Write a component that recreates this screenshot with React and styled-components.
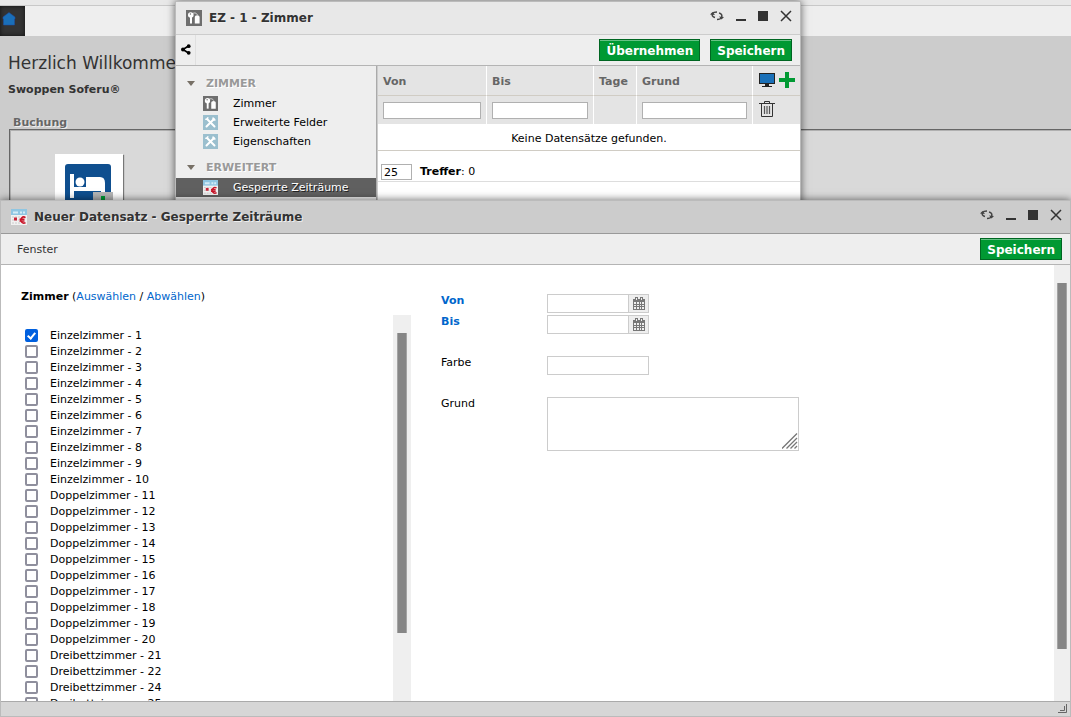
import React from "react"
import styled, { createGlobalStyle } from "styled-components"


const GlobalStyle = createGlobalStyle`
    * {
        box-sizing: border-box;
    }
    body {
        margin: 0;
        background-color: #cccccc;
        font-family: "DejaVu Sans", Verdana, sans-serif;
        font-size: 11px;
        line-height: 16px;
        color: #000000;
    }
    input, button, textarea {
        font-family: inherit;
        font-size: 11px;
    }
`

const zimmerListe = [
    ...[1, 2, 3, 4, 5, 6, 7, 8, 9, 10].map(nr => `Einzelzimmer - ${nr}`),
    ...[11, 12, 13, 14, 15, 16, 17, 18, 19, 20].map(nr => `Doppelzimmer - ${nr}`),
    ...[21, 22, 24, 25].map(nr => `Dreibettzimmer - ${nr}`)
]

/* Icons */

const HomeIcon = () => (
    <svg width="14" height="14" viewBox="0 0 14 14">
        <path d="M7 0.5 L13 5 V7 H12.500 V13 H1.500 V7 H1 V5 Z" fill="#1a6fb8" stroke="#1e4fa8" strokeWidth="0.5" />
    </svg>
)

const KeyIcon = ({ size }) => (
    <svg width={size} height={size} viewBox="0 0 16 16">
        <rect width="16" height="16" fill="#6e6e6e" />
        <circle cx="4.800" cy="5" r="2.800" fill="#fff" />
        <circle cx="4.400" cy="4" r="0.700" fill="#6e6e6e" />
        <path d="M4 7h2v6.500H4z" fill="#fff" />
        <path d="M6 4c2-1.800 4.500-1.200 5.500 1" fill="none" stroke="#fff" strokeWidth="0.700" />
        <path d="M8.800 7q0-1.800 2.400-1.800T13.600 7v6.500H8.800z" fill="#fff" />
    </svg>
)

const ToolsIcon = () => (
    <svg width="15" height="15" viewBox="0 0 15 15">
        <rect width="15" height="15" fill="#9bbfce" />
        <path d="M4.500 4.500l7 7M11 4l-7.500 7.500" stroke="#fff" strokeWidth="2" strokeLinecap="round" />
        <path d="M2.300 4.200a2 2 0 0 0 2.500-2M10.500 2.500a1.500 1.500 0 0 0 2 2.200" fill="none" stroke="#fff" strokeWidth="1.600" />
    </svg>
)

const EuroCalendarIcon = ({ size }) => (
    <svg width={size} height={size} viewBox="0 0 16 16">
        <rect width="16" height="16" fill="#f1f1f1" />
        <rect width="16" height="6" fill="#8fc6e2" />
        <path d="M2 3.500h5M9 3.500h2M12 3.500h2" stroke="#d4ebf6" strokeWidth="2" />
        <path d="M1 8h8M1 11h7M1 14h8" stroke="#ccc" strokeDasharray="2 1" />
        <rect x="3" y="8.500" width="3" height="3" fill="#c8283c" />
        <path d="M14.500 8.500a3 3 0 1 0 0 5M8.500 10.200h5M8.500 12h5" fill="none" stroke="#c81428" strokeWidth="1.500" />
    </svg>
)

const ShareIcon = () => (
    <svg width="10" height="11" viewBox="0 0 10 11">
        <path d="M2 5.500L7.500 2M2 5.500L7.500 9" stroke="#000" strokeWidth="1.500" />
        <circle cx="2" cy="5.500" r="2" />
        <circle cx="7.700" cy="2.200" r="1.900" />
        <circle cx="7.700" cy="8.800" r="1.900" />
    </svg>
)

const RefreshIcon = () => (
    <svg width="14" height="12" viewBox="0 0 14 12" fill="none" stroke="#444" strokeWidth="1.500">
        <path d="M5 7.500C2.500 7 1.500 5 2.500 3.500Q3.500 2 7 2" />
        <path d="M9 3C11.500 3.500 12.500 5.500 11.500 7.500Q10.500 9.500 7 9.500" />
        <path d="M0 4.500L2.500 2L5 5zM14 7L11.500 9.500L9 6.500z" fill="#444" stroke="none" />
    </svg>
)

const MinimizeIcon = () => (
    <svg width="10" height="12" viewBox="0 0 10 12">
        <rect y="9" width="10" height="2" fill="#333" />
    </svg>
)

const MaximizeIcon = () => (
    <svg width="10" height="10" viewBox="0 0 10 10">
        <rect width="10" height="10" fill="#333" />
    </svg>
)

const CloseIcon = () => (
    <svg width="12" height="12" viewBox="0 0 12 12">
        <path d="M1 1L11 11M11 1L1 11" stroke="#333" strokeWidth="1.500" />
    </svg>
)

const MonitorIcon = () => (
    <svg width="16" height="14" viewBox="0 0 16 14">
        <rect x="0.500" y="0.500" width="15" height="10" fill="#1a70b8" stroke="#222" />
        <path d="M6 11h4v2h-4zM3 13h10v1H3z" fill="#222" />
    </svg>
)

const PlusIcon = () => (
    <svg width="16" height="16" viewBox="0 0 16 16">
        <path d="M6 0h4v6h6v4h-6v6H6v-6H0V6h6z" fill="#009933" />
    </svg>
)

const TrashIcon = () => (
    <svg width="16" height="16" viewBox="0 0 16 16" fill="none" stroke="#333">
        <path d="M5.500 2V0.500h5V2M0 2.500h16M2.500 3v12.500h11V3" />
        <path d="M5.500 5v8M8 5v8M10.500 5v8" stroke="#555" strokeWidth="1.200" />
    </svg>
)

const CalendarIcon = () => (
    <svg width="12" height="13" viewBox="0 0 12 13">
        <path d="M0 2h12v11H0zM2 0h3v4H2zM7 0h3v4H7z" fill="#777" />
        <path d="M3 1h1v2H3zM8 1h1v2H8z" fill="#eee" />
        <path d="M1 5h2v2H1zM4 5h2v2H4zM7 5h1v2H7zM9 5h2v2H9zM1 8h2v1H1zM4 8h2v1H4zM7 8h1v1H7zM9 8h2v1H9zM1 10h2v2H1zM4 10h2v2H4zM7 10h1v2H7zM9 10h2v2H9z" fill="#eee" />
    </svg>
)

const BedIcon = () => (
    <svg width="48" height="48" viewBox="0 0 48 48">
        <rect width="46" height="46" rx="3" fill="#0f4f8f" />
        <path d="M5 10h4v13h31v11h-4v-7H9v7H5z" fill="#fff" />
        <circle cx="15" cy="18" r="4.500" fill="#fff" />
        <path d="M21 13h14q5 0 5 6v5H21z" fill="#fff" />
        <rect x="28" y="28" width="20" height="20" fill="#b5b5b5" />
        <path d="M36 32h4v5h5v4h-5v5h-4v-5h-5v-4h5z" fill="#009933" />
    </svg>
)

const GripIcon = () => (
    <svg width="10" height="10" viewBox="0 0 10 10" fill="none" stroke="#666">
        <path d="M0 8.500h8.500V0M2 6.500h4.500V2" />
    </svg>
)

const HatchIcon = () => (
    <svg width="16" height="16" viewBox="0 0 16 16" stroke="#777" strokeWidth="1.300">
        <path d="M0 15.500L15 0.500M4.500 15.500L15 5M8.500 15.500L15 9M12.500 15.500L15 13" />
    </svg>
)


const WindowControls = () => (
    <Controls>
        <IconButton aria-label="Neu laden"><RefreshIcon /></IconButton>
        <IconButton aria-label="Minimieren"><MinimizeIcon /></IconButton>
        <IconButton aria-label="Maximieren"><MaximizeIcon /></IconButton>
        <IconButton aria-label="Schließen"><CloseIcon /></IconButton>
    </Controls>
)

const RoomWindow = () => (
    <ZimmerFenster>
        <TitleBar>
            <KeyIcon size={16} />
            <Title>EZ - 1 - Zimmer</Title>
            <WindowControls />
        </TitleBar>
        <Toolbar>
            <ShareButton aria-label="Teilen"><ShareIcon /></ShareButton>
            <Actions>
                <GreenButton>Übernehmen</GreenButton>
                <GreenButton>Speichern</GreenButton>
            </Actions>
        </Toolbar>
        <RoomBody>
            <Sidebar>
                <NavGroup><Arrow />ZIMMER</NavGroup>
                <NavItem href="#zimmer"><KeyIcon size={15} />Zimmer</NavItem>
                <NavItem href="#felder"><ToolsIcon />Erweiterte Felder</NavItem>
                <NavItem href="#eigenschaften"><ToolsIcon />Eigenschaften</NavItem>
                <NavGroup><Arrow />ERWEITERT</NavGroup>
                <NavItem href="#zeitraeume" $active><EuroCalendarIcon size={15} />Gesperrte Zeiträume</NavItem>
            </Sidebar>
            <Content>
                <Grid>
                    <colgroup>
                        <col width="109" />
                        <col width="107" />
                        <col width="43" />
                        <col width="116" />
                        <col />
                    </colgroup>
                    <thead>
                        <tr>
                            <HeadCell>Von</HeadCell>
                            <HeadCell>Bis</HeadCell>
                            <HeadCell>Tage</HeadCell>
                            <HeadCell>Grund</HeadCell>
                            <ActionHeadCell>
                                <CellIcons>
                                    <IconButton aria-label="Ansicht"><MonitorIcon /></IconButton>
                                    <IconButton aria-label="Hinzufügen"><PlusIcon /></IconButton>
                                </CellIcons>
                            </ActionHeadCell>
                        </tr>
                        <tr>
                            <FilterCell><FilterInput aria-label="Filter Von" /></FilterCell>
                            <FilterCell><FilterInput aria-label="Filter Bis" /></FilterCell>
                            <FilterCell />
                            <FilterCell><FilterInput aria-label="Filter Grund" /></FilterCell>
                            <ActionCell>
                                <CellIcons><IconButton aria-label="Löschen"><TrashIcon /></IconButton></CellIcons>
                            </ActionCell>
                        </tr>
                    </thead>
                    <tbody>
                        <tr><EmptyCell colSpan="5">Keine Datensätze gefunden.</EmptyCell></tr>
                    </tbody>
                </Grid>
                <Pager>
                    <PageSize defaultValue="25" aria-label="Anzahl" />
                    <span><b>Treffer</b>: 0</span>
                </Pager>
            </Content>
        </RoomBody>
    </ZimmerFenster>
)

class RecordWindow extends React.Component {
    constructor(props) {
        super(props);
        this.state = { ausgewaehlt: ["Einzelzimmer - 1"] }
    }

    toggleZimmer = name => {
        const { ausgewaehlt } = this.state
        this.setState({
            ausgewaehlt: ausgewaehlt.includes(name)
                ? ausgewaehlt.filter(z => z !== name)
                : [...ausgewaehlt, name]
        })
    }

    alle = event => {
        event.preventDefault()
        this.setState({ ausgewaehlt: zimmerListe })
    }

    keine = event => {
        event.preventDefault()
        this.setState({ ausgewaehlt: [] })
    }

    render() {
        const liste = zimmerListe.map(name => (
            <RoomRow key={name}>
                <Checkbox
                    type="checkbox"
                    checked={this.state.ausgewaehlt.includes(name)}
                    onChange={() => this.toggleZimmer(name)}
                />
                {name}
            </RoomRow>
        ))
        return (
            <DatensatzFenster>
                <TitleBar $dark>
                    <EuroCalendarIcon size={16} />
                    <Title>Neuer Datensatz - Gesperrte Zeiträume</Title>
                    <WindowControls />
                </TitleBar>
                <Toolbar>
                    <MenuButton>Fenster</MenuButton>
                    <Actions>
                        <GreenButton>Speichern</GreenButton>
                    </Actions>
                </Toolbar>
                <RecordBody>
                    <RoomColumn>
                        <RoomHeading>
                            <b>Zimmer</b> (<Link href="#alle" onClick={this.alle}>Auswählen</Link> / <Link href="#keine" onClick={this.keine}>Abwählen</Link>)
                        </RoomHeading>
                        <RoomScroll>
                            <RoomList>{liste}</RoomList>
                            <Track $width={18}><Thumb $length={300} /></Track>
                        </RoomScroll>
                    </RoomColumn>
                    <Form onSubmit={event => event.preventDefault()}>
                        <Field>
                            <Label htmlFor="von" $required>Von</Label>
                            <DateBox>
                                <DateInput id="von" />
                                <DateButton type="button" aria-label="Kalender Von"><CalendarIcon /></DateButton>
                            </DateBox>
                        </Field>
                        <Field $last>
                            <Label htmlFor="bis" $required>Bis</Label>
                            <DateBox>
                                <DateInput id="bis" />
                                <DateButton type="button" aria-label="Kalender Bis"><CalendarIcon /></DateButton>
                            </DateBox>
                        </Field>
                        <Field $last>
                            <Label htmlFor="farbe">Farbe</Label>
                            <TextInput id="farbe" />
                        </Field>
                        <Field>
                            <Label htmlFor="grund">Grund</Label>
                            <AreaBox>
                                <TextArea id="grund" />
                                <AreaGrip><HatchIcon /></AreaGrip>
                            </AreaBox>
                        </Field>
                    </Form>
                    <Track $width={16}><Thumb $length={366} /></Track>
                </RecordBody>
                <StatusBar><GripIcon /></StatusBar>
            </DatensatzFenster>
        )
    }
}

const App = () => (
    <Desktop>
        <GlobalStyle />
        <TopStrip />
        <TabBar>
            <HomeTab href="#home" aria-label="Start"><HomeIcon /></HomeTab>
        </TabBar>
        <Welcome>
            <Greeting>Herzlich Willkommen</Greeting>
            <Company>Swoppen Soferu®</Company>
            <PanelTitle>Buchung</PanelTitle>
            <Panel>
                <Tile><BedIcon /></Tile>
            </Panel>
        </Welcome>
        <RoomWindow />
        <RecordWindow />
    </Desktop>
)


const Desktop = styled.div`
    position: relative;
    display: flex;
    flex-direction: column;
    height: 100vh;
    overflow: hidden;
`
const TopStrip = styled.div`
    flex: none;
    height: 6px;
    background-color: #e8e8e8;
    border-bottom: 1px solid #c8c8c8;
`
const TabBar = styled.nav`
    display: flex;
    flex: none;
    height: 30px;
    background-color: #eeeeee;
`
const HomeTab = styled.a`
    display: flex;
    width: 25px;
    padding: 6px 2px;
    background-color: #333333;
    box-shadow: inset 0 0 4px #111111;
`
const Welcome = styled.main`
    display: flex;
    flex: 1;
    flex-direction: column;
    padding-left: 8px;
    color: #333333;
    white-space: nowrap;
`
const Greeting = styled.h1`
    margin: 16px 0 0;
    font-size: 17px;
    font-weight: normal;
    line-height: 22px;
`
const Company = styled.div`
    margin-top: 8px;
    font-weight: bold;
`
const PanelTitle = styled.div`
    margin-top: 16px;
    padding-left: 5px;
    color: #666666;
    font-weight: bold;
    line-height: 18px;
    text-shadow: 1px 1px 0 #eeeeee;
`
const Panel = styled.section`
    flex: 1;
    margin: -3px 0 0 1px;
    padding: 24px 45px;
    background-color: #d9d9d9;
    border: 1px solid #666666;
    border-width: 1px 0 0 1px;
    box-shadow: inset 1px 1px 0 #b0b0b0;
`
const Tile = styled.div`
    width: 68px;
    height: 68px;
    padding: 10px;
    background-color: #ffffff;
    box-shadow: 1px 1px 1px #777777;
`

const Fenster = styled.section`
    position: absolute;
    display: flex;
    flex-direction: column;
    border: 1px solid #bbbbbb;
    box-shadow: 0 0 8px rgba(0, 0, 0, 0.6);
`
const ZimmerFenster = styled(Fenster)`
    top: 1px;
    left: 175px;
    width: 626px;
    height: 240px;
`
const DatensatzFenster = styled(Fenster)`
    top: 200px;
    right: 0;
    bottom: 0;
    left: 0;
`
const TitleBar = styled.header`
    display: flex;
    flex: none;
    align-items: center;
    gap: 7px;
    height: 33px;
    padding: 0 8px 0 10px;
    background-color: ${props => props.$dark ? "#cccccc" : "#e8e8e8"};
    border-bottom: 1px solid ${props => props.$dark ? "#999999" : "#cccccc"};
`
const Title = styled.h2`
    flex: 1;
    margin: 0;
    color: #333333;
    font-size: 12px;
    font-weight: bold;
    text-shadow: 1px 1px 0 #eeeeee;
`
const Controls = styled.div`
    display: flex;
    align-items: center;
    gap: 12px;
    padding-bottom: 4px;
`
const IconButton = styled.button`
    display: flex;
    padding: 0;
    background: none;
    border: none;
`
const Toolbar = styled.div`
    display: flex;
    flex: none;
    align-items: center;
    justify-content: space-between;
    height: 31px;
    padding-right: 8px;
    background-color: #eeeeee;
    border-bottom: 1px solid #b4b4b4;
`
const ShareButton = styled(IconButton)`
    align-items: center;
    align-self: stretch;
    width: 20px;
    padding: 0 0 2px 5px;
    border-right: 1px solid #e0e0e0;
`
const MenuButton = styled.button`
    padding: 0 16px;
    background: none;
    border: none;
    color: #333333;
`
const Actions = styled.div`
    display: flex;
    gap: 10px;
`
const GreenButton = styled.button`
    height: 22px;
    padding: 2px 6px 0;
    background-color: #009933;
    border: 1px solid #006622;
    box-shadow: inset 0 1px 0 #66c285;
    color: #ffffff;
    font-size: 12px;
    font-weight: bold;
    line-height: 18px;
`

const RoomBody = styled.div`
    display: flex;
    flex: 1;
`
const Sidebar = styled.nav`
    flex: none;
    width: 201px;
    padding-top: 7px;
    background-color: #eeeeee;
    border-right: 1px solid #aaaaaa;
`
const NavGroup = styled.div`
    display: flex;
    align-items: center;
    gap: 11px;
    height: 21px;
    padding-left: 11px;
    color: #999999;
    font-weight: bold;
    text-shadow: 1px 1px 0 #ffffff;

    a + & {
        margin-top: 6px;
    }
`
const Arrow = styled.span`
    width: 8px;
    border: 4px solid transparent;
    border-top: 5px solid #777066;
    border-bottom: none;
`
const NavItem = styled.a`
    display: flex;
    align-items: center;
    gap: 15px;
    height: 19px;
    padding-left: 27px;
    background-color: ${props => props.$active ? "#606060" : "transparent"};
    color: ${props => props.$active ? "#ffffff" : "#000000"};
    text-decoration: none;
    text-shadow: ${props => props.$active ? "1px 1px 0 #222222" : "none"};
`
const Content = styled.div`
    flex: 1;
    background-color: #ffffff;
    border-left: 1px solid #cccccc;
`
const Grid = styled.table`
    width: 100%;
    table-layout: fixed;
    border-collapse: separate;
    border-spacing: 0;
`
const HeadCell = styled.th`
    height: 30px;
    padding: 3px 5px 0;
    background-color: #e4e4e4;
    border-right: 1px solid #ffffff;
    border-bottom: 1px solid #d0ccc4;
    color: #666666;
    text-align: left;

    &:last-child {
        border-right: none;
    }
`
const ActionHeadCell = styled(HeadCell)`
    padding: 0 6px 2px;
`
const FilterCell = styled.td`
    height: 28px;
    padding: 0 5px;
    background-color: #e4e4e4;
    border-right: 1px solid #ffffff;

    &:last-child {
        border-right: none;
    }
`
const ActionCell = styled(FilterCell)`
    padding: 0 6px 2px;
`
const CellIcons = styled.div`
    display: flex;
    align-items: center;
    gap: 4px;
`
const FilterInput = styled.input`
    display: block;
    width: 100%;
    height: 17px;
    border: 1px solid #b0b0b0;
`
const EmptyCell = styled.td`
    height: 27px;
    padding: 3px 0 0;
    border-bottom: 1px solid #d0ccc4;
    text-align: center;
`
const Pager = styled.div`
    display: flex;
    align-items: flex-end;
    gap: 8px;
    height: 31px;
    padding: 0 3px 1px;
    border-bottom: 1px solid #dddddd;
`
const PageSize = styled.input`
    width: 31px;
    height: 16px;
    padding: 0 2px;
    border: 1px solid #b0b0b0;
`

const RecordBody = styled.div`
    display: flex;
    flex: 1;
    min-height: 0;
    background-color: #ffffff;
`
const RoomColumn = styled.div`
    display: flex;
    flex: none;
    flex-direction: column;
    width: 410px;
    padding: 24px 0 0 20px;
`
const RoomHeading = styled.div`
    margin-bottom: 10px;
`
const Link = styled.a`
    color: #0066cc;
    text-decoration: none;
`
const RoomScroll = styled.div`
    display: flex;
    flex: 1;
    min-height: 0;
`
const RoomList = styled.div`
    flex: 1;
    padding: 13px 4px 0;
    overflow: hidden;
`
const RoomRow = styled.label`
    display: flex;
    align-items: center;
    gap: 12px;
    height: 16px;
`
const Checkbox = styled.input`
    display: flex;
    justify-content: center;
    width: 13px;
    height: 13px;
    margin: 0 0 2px;
    appearance: none;
    background-color: #ffffff;
    border: 2px solid #8f8f9d;
    border-radius: 2px;

    &:checked {
        background-color: #0060df;
        border-color: #0060df;
    }
    &:checked::after {
        content: "";
        box-sizing: border-box;
        width: 5px;
        height: 8px;
        border: solid #ffffff;
        border-width: 0 2px 2px 0;
        transform: rotate(40deg);
    }
`
const Track = styled.div`
    display: flex;
    flex: none;
    justify-content: center;
    width: ${props => props.$width}px;
    padding-top: 18px;
    background-color: #efefef;
`
const Thumb = styled.div`
    width: 10px;
    height: ${props => props.$length}px;
    background-color: #868686;
    border: 1px solid #a4a4a4;
    border-width: 0 1px;
`
const Form = styled.form`
    flex: 1;
    padding: 29px 0 0 30px;
`
const Field = styled.div`
    display: flex;
    margin-bottom: ${props => props.$last ? 22 : 2}px;
`
const Label = styled.label`
    width: 106px;
    line-height: 13px;
    color: ${props => props.$required ? "#0066cc" : "#000000"};
    font-weight: ${props => props.$required ? "bold" : "normal"};
`
const DateBox = styled.div`
    display: flex;
    width: 102px;
    height: 19px;
    border: 1px solid #cccccc;
`
const DateInput = styled.input`
    width: 80px;
    padding: 0 2px;
    border: none;
`
const DateButton = styled.button`
    display: flex;
    flex: 1;
    align-items: center;
    justify-content: center;
    padding: 0;
    background-color: #eeeeee;
    border: none;
    border-left: 1px solid #cccccc;
`
const TextInput = styled.input`
    width: 102px;
    height: 19px;
    padding: 0 2px;
    border: 1px solid #cccccc;
`
const AreaBox = styled.div`
    position: relative;
    width: 252px;
    height: 54px;
`
const TextArea = styled.textarea`
    display: block;
    width: 100%;
    height: 100%;
    border: 1px solid #cccccc;
    resize: none;
`
const AreaGrip = styled.span`
    position: absolute;
    right: 1px;
    bottom: 2px;
    display: flex;
`
const StatusBar = styled.footer`
    display: flex;
    flex: none;
    align-items: flex-end;
    justify-content: flex-end;
    height: 15px;
    padding: 2px;
    background-color: #d6d6d6;
    border-top: 1px solid #aaaaaa;
`

export default App
